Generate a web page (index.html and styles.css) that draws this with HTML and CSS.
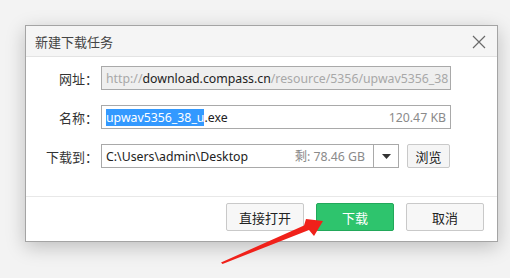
FILE: index.html
```html
<!DOCTYPE html>
<html>
<head>
<meta charset="utf-8">
<link rel="stylesheet" href="styles.css">
</head>
<body>
<div class="dialog">
  <div class="titlebar">
    <span class="title">新建下载任务</span>
    <svg class="close" width="14" height="14" viewBox="0 0 14 14"><path d="M1 1 L13 13 M13 1 L1 13" stroke="#6a6a6a" stroke-width="1.2" fill="none"/></svg>
  </div>
  <div class="body">
    <div class="row">
      <label class="lbl">网址：</label>
      <div class="field readonly"><span class="dim">http://</span>download.compass.cn<span class="dim">/resource/5356/upwav5356_38</span></div>
    </div>
    <div class="row">
      <label class="lbl">名称：</label>
      <div class="field split"><span><span class="sel">upwav5356_38_u</span>.exe</span><span class="dim2">120.47 KB</span></div>
    </div>
    <div class="row">
      <label class="lbl">下载到：</label>
      <div class="combo">
        <div class="field split inner"><span>C:\Users\admin\Desktop</span><span class="dim2">剩: 78.46 GB</span></div>
        <div class="drop"><svg width="9" height="5" viewBox="0 0 9 5"><path d="M0 0 H9 L4.5 5 Z" fill="#333"/></svg></div>
      </div>
      <button class="btn small">浏览</button>
    </div>
  </div>
  <div class="footer">
    <button class="btn">直接打开</button>
    <button class="btn primary">下载</button>
    <button class="btn">取消</button>
  </div>
</div>
<svg class="arrow" width="510" height="278" viewBox="0 0 510 278"><polygon points="221,262.5 304,225.5 306,219 323,221 314,236 309,230 222.5,264" fill="#f0211a"/></svg>
</body>
</html>
```
FILE: styles.css
```css
html, body { margin: 0; padding: 0; }
body {
  width: 510px; height: 278px; overflow: hidden;
  background: #f3f3f3;
  font-family: "Noto Sans", "Noto Sans CJK SC", sans-serif;
  font-size: 13px; color: #222;
  padding: 25px 0 0 25px; box-sizing: border-box;
  position: relative;
}
.dialog {
  width: 473px; height: 217px; box-sizing: border-box;
  border: 1px solid #a4a4a4; background: #fff;
  box-shadow: 0 5px 18px rgba(0,0,0,0.22);
  display: flex; flex-direction: column;
}
.titlebar {
  height: 31px; box-sizing: border-box; background: #f5f5f5;
  border-bottom: 1px solid #e3e3e3;
  display: flex; align-items: center; justify-content: space-between;
  padding: 0 11px 0 9px;
}
.title { color: #444; font-family: "Noto Sans CJK SC", sans-serif; font-size: 13px; }
.close { display: block; margin-top: 1px; }
.body { padding: 9px 0 0 0; display: flex; flex-direction: column; gap: 15px; height: 140px; box-sizing: border-box; border-bottom: 1px solid #e8e8e8; }
.row { display: flex; align-items: center; height: 24px; }
.lbl { width: 72px; text-align: right; font-family: "Noto Sans CJK SC", sans-serif; color: #333; margin-right: 3px; flex: none; }
.field {
  width: 350px; height: 24px; box-sizing: border-box; border: 1px solid #a9a9a9;
  padding: 0 4px; display: flex; align-items: center; white-space: nowrap; overflow: hidden;
  font-size: 12.3px;
}
.readonly { background: #efefef; }
.dim { color: #a8a8a8; }
.dim2 { color: #8a8a8a; }
.split { justify-content: space-between; }
.sel { background: #3399ff; color: #fff; }
.combo { display: flex; width: 298px; height: 24px; border: 1px solid #a9a9a9; box-sizing: border-box; }
.combo .inner { border: none; border-right: 1px solid #a9a9a9; flex: 1; height: 22px; padding-right: 8px; }
.drop { width: 24px; display: flex; align-items: center; justify-content: center; }
.btn {
  font-family: "Noto Sans CJK SC", sans-serif; font-size: 13px; color: #222;
  width: 78px; height: 28px; background: #f7f7f7; border: 1px solid #c9c9c9; border-radius: 2px;
  padding: 0; margin: 0;
}
.btn.small { width: 43px; height: 24px; margin-left: 8px; background: #f5f5f5; }
.btn.primary { background: #2ec46d; border-color: #22a85a; color: #fff; }
.footer { display: flex; justify-content: flex-end; gap: 12px; padding: 6px 13px 0 0; }
.arrow { position: absolute; left: 0; top: 0; pointer-events: none; }
```
